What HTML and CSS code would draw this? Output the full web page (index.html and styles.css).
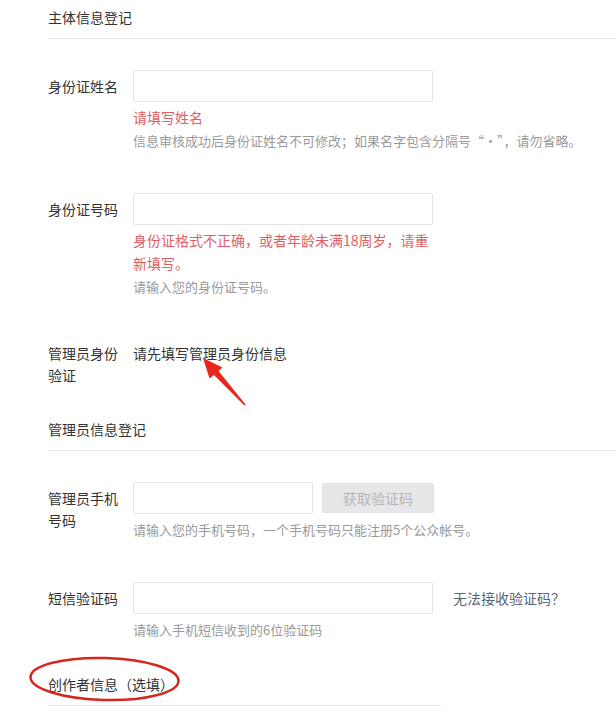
FILE: index.html
```html
<html lang="zh-CN">
<head>
    <meta charset="utf-8">
    <title>主体信息登记</title>
    <link rel="stylesheet" href="styles.css">
</head>
<body>
    <div class="page">
        <h2 class="section-title">主体信息登记</h2>

        <div class="form-row">
            <label class="form-label">身份证姓名</label>
            <div class="form-control">
                <input class="text-input" type="text">
                <p class="msg-error">请填写姓名</p>
                <p class="msg-tip">信息审核成功后身份证姓名不可修改；如果名字包含分隔号“·”，请勿省略。</p>
            </div>
        </div>

        <div class="form-row">
            <label class="form-label">身份证号码</label>
            <div class="form-control">
                <input class="text-input" type="text">
                <p class="msg-error">身份证格式不正确，或者年龄未满18周岁，请重新填写。</p>
                <p class="msg-tip">请输入您的身份证号码。</p>
            </div>
        </div>

        <div class="form-row tight">
            <label class="form-label">管理员身份验证</label>
            <div class="form-control">
                <p class="plain-value">请先填写管理员身份信息</p>
            </div>
        </div>

        <h2 class="section-title">管理员信息登记</h2>

        <div class="form-row">
            <label class="form-label">管理员手机号码</label>
            <div class="form-control">
                <div class="input-line">
                    <input class="text-input short" type="text">
                    <button class="code-btn" disabled>获取验证码</button>
                </div>
                <p class="msg-tip">请输入您的手机号码，一个手机号码只能注册5个公众帐号。</p>
            </div>
        </div>

        <div class="form-row">
            <label class="form-label">短信验证码</label>
            <div class="form-control">
                <div class="input-line">
                    <input class="text-input" type="text">
                    <a class="help-link" href="#">无法接收验证码？</a>
                </div>
                <p class="msg-tip">请输入手机短信收到的6位验证码</p>
            </div>
        </div>

        <h2 class="section-title last">创作者信息（选填）</h2>
    </div>

    <!-- red annotation marks drawn over the form -->
    <svg class="marks" width="616" height="714" viewBox="0 0 616 714">
        <polygon points="203,358 222.5,367.5 218.5,371 245.6,404.5 244.4,405.5 214,375 209.5,378.5" fill="#e8261d"/>
        <ellipse cx="104.5" cy="679" rx="74" ry="21" fill="none" stroke="#d6261f" stroke-width="2.5" transform="rotate(1.5 104.5 679)"/>
    </svg>
</body>
</html>
```

FILE: styles.css
```css
body {
    margin: 0;
    background: #fff;
    font-family: "Noto Sans CJK SC", "Microsoft YaHei", sans-serif;
    font-size: 14px;
    color: #333;
}
.page {
    padding: 6px 0 0 48px;
}
p {
    margin: 0;
}
.section-title {
    margin: 32px 0 0 0;
    padding-bottom: 10px;
    border-bottom: 1px solid #e7e7eb;
    font-size: 14px;
    font-weight: normal;
    line-height: 22px;
    color: #333;
}
.section-title:first-child {
    margin-top: 0;
}
.section-title.last {
    width: 393px;
}
.form-row {
    display: flex;
    margin-top: 41px;
}
.form-row.tight {
    margin-top: 39px;
}
.section-title + .form-row {
    margin-top: 31px;
}
.form-label {
    width: 72px;
    margin-right: 13px;
    padding-top: 5px;
    line-height: 22px;
    color: #333;
}
.form-control {
    display: flex;
    flex-direction: column;
}
.input-line {
    display: flex;
    align-items: center;
}
.text-input {
    box-sizing: border-box;
    width: 300px;
    height: 32px;
    margin: 0;
    border: 1px solid #e4e4e8;
    border-radius: 2px;
    background: #fff;
    outline: none;
}
.text-input.short {
    width: 180px;
}
.code-btn {
    box-sizing: border-box;
    width: 112px;
    height: 30px;
    margin-left: 9px;
    border: 1px solid #e2e2e2;
    border-radius: 2px;
    background-color: #e7e7e9;
    color: #b5b5b5;
    font-family: inherit;
    font-size: 14px;
}
.help-link {
    margin-left: 20px;
    color: #5b6578;
    text-decoration: none;
}
.msg-error {
    max-width: 300px;
    margin-top: 4px;
    line-height: 23px;
    color: #e15f63;
}
.msg-error + .msg-tip {
    margin-top: 0;
}
.msg-tip {
    margin-top: 4px;
    font-size: 13px;
    line-height: 23px;
    color: #9a9a9a;
    white-space: nowrap;
}
.plain-value {
    padding-top: 5px;
    line-height: 22px;
    color: #333;
}
/* annotation overlay */
.marks {
    position: absolute;
    top: 0;
    left: 0;
    pointer-events: none;
}
```
